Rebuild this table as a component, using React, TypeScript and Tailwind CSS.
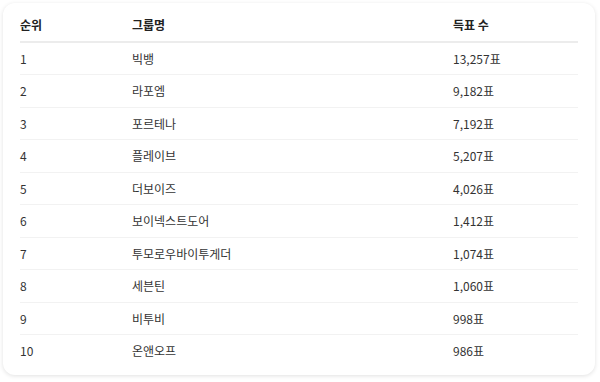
import React from "react";

const rows = [
  { rank: 1, name: "빅뱅", votes: "13,257표" },
  { rank: 2, name: "라포엠", votes: "9,182표" },
  { rank: 3, name: "포르테나", votes: "7,192표" },
  { rank: 4, name: "플레이브", votes: "5,207표" },
  { rank: 5, name: "더보이즈", votes: "4,026표" },
  { rank: 6, name: "보이넥스트도어", votes: "1,412표" },
  { rank: 7, name: "투모로우바이투게더", votes: "1,074표" },
  { rank: 8, name: "세븐틴", votes: "1,060표" },
  { rank: 9, name: "비투비", votes: "998표" },
  { rank: 10, name: "온앤오프", votes: "986표" },
];

const App = () => {
  return (
    <div
      className="w-[600px] h-[382px] bg-white p-[3px] pr-[5px]"
      style={{ fontFamily: '"Noto Sans CJK KR", "Noto Sans", sans-serif' }}
    >
      <div className="h-[372px] rounded-xl bg-white shadow-[0_1px_4px_rgba(0,0,0,0.12)] px-[17px] pt-[6px]">
        <div className="grid grid-cols-[112px_321px_1fr] border-b-2 border-[#ececec] text-[12px] leading-[15.5px] font-bold text-[#222]">
          <div className="py-2">순위</div>
          <div className="py-2">그룹명</div>
          <div className="py-2">득표 수</div>
        </div>
        {rows.map((row, i) => (
          <div
            key={row.rank}
            className={`grid grid-cols-[112px_321px_1fr] text-[12px] leading-[15.5px] text-[#333] ${
              i < rows.length - 1 ? "border-b border-[#f2f2f2]" : ""
            }`}
          >
            <div className="py-2">{row.rank}</div>
            <div className="py-2">{row.name}</div>
            <div className="py-2">{row.votes}</div>
          </div>
        ))}
      </div>
    </div>
  );
};

export default App;
